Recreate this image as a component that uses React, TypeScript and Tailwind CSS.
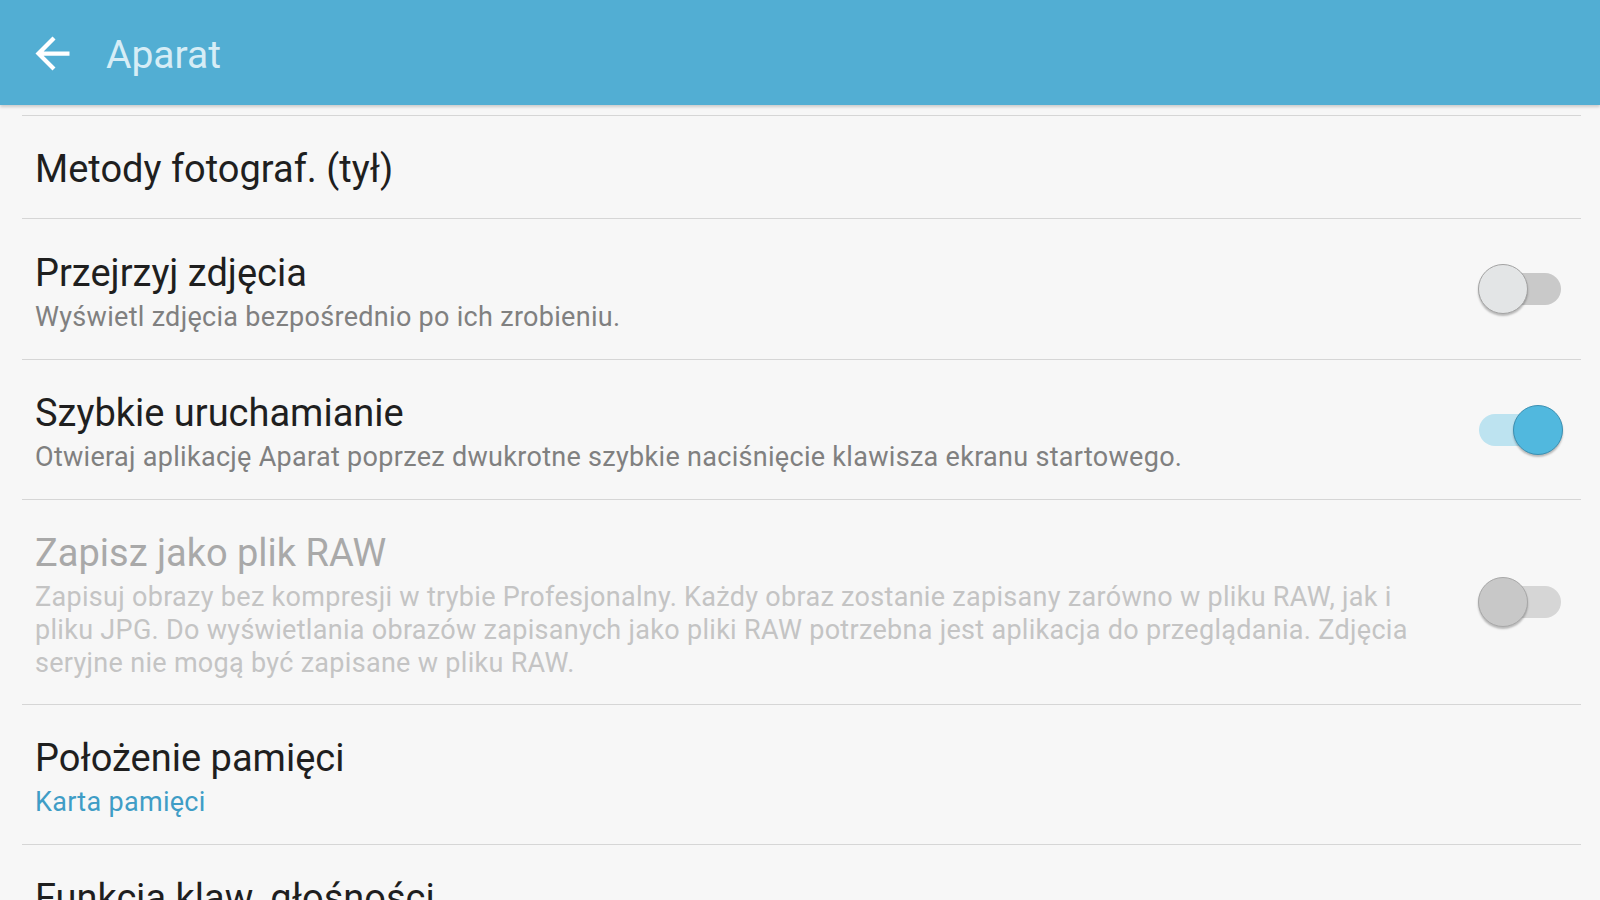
import React from 'react';

interface SettingItem {
  id: string;
  title: string;
  summary?: string;
  summaryAccent?: boolean;
  toggle?: 'on' | 'off';
  disabled?: boolean;
  height: string;
}

const items: SettingItem[] = [
  { id: 'methods', title: 'Metody fotograf. (tył)', height: 'h-[102px]' },
  {
    id: 'review',
    title: 'Przejrzyj zdjęcia',
    summary: 'Wyświetl zdjęcia bezpośrednio po ich zrobieniu.',
    toggle: 'off',
    height: 'h-[140px]',
  },
  {
    id: 'quick',
    title: 'Szybkie uruchamianie',
    summary: 'Otwieraj aplikację Aparat poprzez dwukrotne szybkie naciśnięcie klawisza ekranu startowego.',
    toggle: 'on',
    height: 'h-[139px]',
  },
  {
    id: 'raw',
    title: 'Zapisz jako plik RAW',
    summary:
      'Zapisuj obrazy bez kompresji w trybie Profesjonalny. Każdy obraz zostanie zapisany zarówno w pliku RAW, jak i pliku JPG. Do wyświetlania obrazów zapisanych jako pliki RAW potrzebna jest aplikacja do przeglądania. Zdjęcia seryjne nie mogą być zapisane w pliku RAW.',
    toggle: 'off',
    disabled: true,
    height: 'h-[204px]',
  },
  {
    id: 'storage',
    title: 'Położenie pamięci',
    summary: 'Karta pamięci',
    summaryAccent: true,
    height: 'h-[139px]',
  },
  {
    id: 'volume',
    title: 'Funkcja klaw. głośności',
    summary: 'Zrób zdjęcie',
    summaryAccent: true,
    height: 'h-[139px]',
  },
];

const Toggle: React.FC<{ checked: boolean; disabled?: boolean }> = ({ checked, disabled }) => {
  if (checked) {
    return (
      <div className="relative w-[85px] h-[50px] shrink-0">
        <div className="absolute left-[1px] top-[9px] w-[80px] h-[32px] rounded-full bg-[#bde3f0]" />
        <div className="absolute left-[35px] top-0 w-[50px] h-[50px] rounded-full bg-[#51b8de] border border-[#3c90b2] shadow-[0_2px_2px_rgba(0,0,0,0.25)]" />
      </div>
    );
  }
  return (
    <div className="relative w-[85px] h-[50px] shrink-0">
      <div
        className={`absolute left-[3px] top-[9px] w-[80px] h-[32px] rounded-full ${
          disabled ? 'bg-[#d6d6d6]' : 'bg-[#c9c9c9]'
        }`}
      />
      <div
        className={`absolute left-0 top-0 w-[50px] h-[50px] rounded-full border shadow-[0_2px_2px_rgba(0,0,0,0.25)] ${
          disabled ? 'bg-[#c8c8c8] border-[#a8a8a8]' : 'bg-[#e3e5e6] border-[#a3a3a3]'
        }`}
      />
    </div>
  );
};

const SettingRow: React.FC<{ item: SettingItem }> = ({ item }) => {
  const titleColor = item.disabled ? 'text-[#a9a9a9]' : 'text-[#1f1f1f]';
  const summaryColor = item.disabled
    ? 'text-[#c4c4c4]'
    : item.summaryAccent
    ? 'text-[#3f9dc6]'
    : 'text-[#808080]';

  return (
    <div className={`${item.height} flex items-center pl-[13px] pr-[18px]`}>
      <div className="flex-1 min-w-0 pt-[4px]">
        <div className={`text-[38px] leading-[48px] ${titleColor}`}>{item.title}</div>
        {item.summary && (
          <p className={`w-[1400px] mt-[4px] text-[27px] leading-[33px] tracking-[0.3px] ${summaryColor}`}>
            {item.summary}
          </p>
        )}
      </div>
      {item.toggle && <Toggle checked={item.toggle === 'on'} disabled={item.disabled} />}
    </div>
  );
};

export default function App() {
  return (
    <div className="w-[1600px] h-[900px] overflow-hidden bg-[#f7f7f7] font-['Roboto',_'Noto_Sans',_sans-serif]">
      <header className="relative z-10 h-[105px] flex items-center bg-[#52aed3] shadow-[0_2px_3px_rgba(0,0,0,0.18)]">
        <svg className="ml-[27px] mt-[2px] w-[51px] h-[51px]" viewBox="0 0 24 24" fill="#ffffff">
          <path d="M20 11H7.83l5.59-5.59L12 4l-8 8 8 8 1.41-1.41L7.83 13H20v-2z" />
        </svg>
        <h1 className="ml-[28px] pt-[6px] text-[39px] leading-none text-[#d6edf6] font-normal">Aparat</h1>
      </header>

      <div className="pt-[10px] pl-[22px] pr-[19px]">
        <div className="h-px bg-[#d6d6d6]" />
        {items.map(item => (
          <div key={item.id}>
            <SettingRow item={item} />
            <div className="h-px bg-[#d6d6d6]" />
          </div>
        ))}
      </div>
    </div>
  );
}
